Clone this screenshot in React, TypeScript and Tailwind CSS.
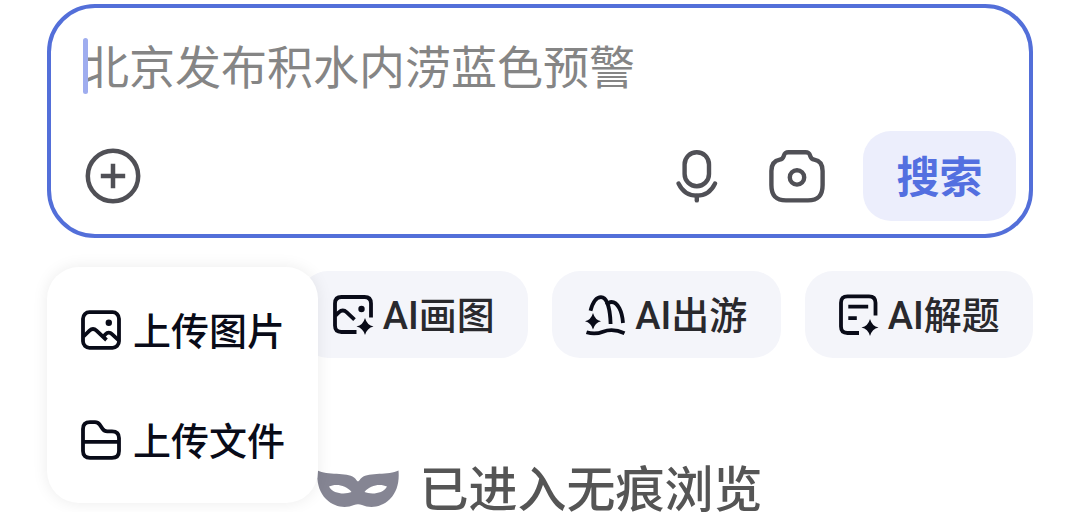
import type { ReactNode } from "react";

function PlusCircleIcon() {
  return (
    <svg width="56" height="56" viewBox="0 0 56 56" fill="none" stroke="currentColor" strokeWidth="4.5" aria-hidden="true">
      <circle cx="28" cy="28" r="25.2" />
      <path d="M15.8 28h24.4M28 15.8v24.4" />
    </svg>
  );
}

function MicIcon() {
  return (
    <svg width="42" height="54" viewBox="0 0 42 54" fill="none" stroke="currentColor" strokeWidth="4.4" strokeLinecap="round" aria-hidden="true">
      <rect x="8.6" y="3.2" width="24.4" height="34" rx="12.2" />
      <path d="M2.6 34.6C6.200 42.200 13 46.600 20.800 46.600s14.600-4.400 18.200-12" />
      <path d="M20.800 46.600v4.800" />
    </svg>
  );
}

function CameraIcon() {
  return (
    <svg width="56" height="54" viewBox="0 0 56 54" fill="none" stroke="currentColor" strokeWidth="4.4" strokeLinejoin="round" aria-hidden="true">
      <path d="M19.5 3.200H36.500C40.500 3.200 40.600 5.200 41.400 7.400C42.100 9.600 43.200 10.300 45.200 10.600C51 11.600 53.600 15.400 53.600 22V36C53.600 46.600 49 51.400 39 51.400H17C7 51.400 2.400 46.600 2.400 36V22C2.400 15.400 5 11.600 10.800 10.600C12.800 10.300 13.900 9.600 14.600 7.400C15.400 5.200 15.500 3.200 19.500 3.200Z" />
      <circle cx="28" cy="28.400" r="7.200" />
    </svg>
  );
}

function PictureIcon() {
  return (
    <svg width="40" height="40" viewBox="0 0 40 40" fill="none" stroke="currentColor" strokeWidth="3.8" aria-hidden="true">
      <rect x="2" y="2.200" width="36" height="35.600" rx="6.500" />
      <path d="M2.500 26.500L8.500 20.600C10.700 18.500 13.300 18.500 15.500 20.600L25.500 30" />
      <path d="M22 27L24.500 24.300C26.500 22.200 29 22.200 31 24.200L37.500 30.200" />
      <circle cx="27.800" cy="12.800" r="3.200" fill="currentColor" stroke="none" />
    </svg>
  );
}

function FolderIcon() {
  return (
    <svg width="40" height="40" viewBox="0 0 40 40" fill="none" stroke="currentColor" strokeWidth="3.800" strokeLinejoin="round" aria-hidden="true">
      <path d="M2 9C2 4.500 4.500 2.200 9 2.200H14C16.200 2.200 17.400 2.900 18.700 4.700L21.600 8.800C22.900 10.600 24 11.300 26.200 11.300H31C35.500 11.300 38 13.700 38 18V31C38 35.500 35.500 37.800 31 37.800H9C4.500 37.800 2 35.500 2 31Z" />
      <path d="M2 21.800H38" />
    </svg>
  );
}

function DrawIcon() {
  return (
    <svg width="42" height="42" viewBox="0 0 42 42" fill="none" stroke="currentColor" strokeWidth="3.800" aria-hidden="true">
      <path d="M23.500 38H8.500C4.200 38 2 35.800 2 31.500V9.500C2 5.200 4.200 3 8.500 3H31.500C35.800 3 38 5.200 38 9.500V23.500" />
      <path d="M2.500 21.500L5.800 18.400C8.400 16 11.200 16 13.800 18.400L21.500 25.600" />
      <circle cx="28.500" cy="15" r="3.200" fill="currentColor" stroke="none" />
      <path d="M32 24Q34 31.200 40.500 32.500Q34 34 32 41Q30 34 23.500 32.500Q30 31.200 32 24Z" fill="currentColor" stroke="none" />
    </svg>
  );
}

function TravelIcon() {
  return (
    <svg width="42" height="42" viewBox="0 0 42 42" fill="none" stroke="currentColor" strokeWidth="3.800" aria-hidden="true">
      <path d="M5.500 16.800C7.700 8.500 11 3.200 16 3.200C22.500 3.200 25.200 16 25.600 30" />
      <path d="M21.500 11C23 9 24.500 8 26.500 8C32.800 8 37.200 17.500 38 29" />
      <path d="M1.500 38.300C9 40.500 13.500 39.500 18 37.700C25.500 34.800 32 35.800 39.500 39.300" />
      <path d="M8 19Q10 26 16 27.300Q10 28.600 8 35.500Q6 28.600 0 27.300Q6 26 8 19Z" fill="currentColor" stroke="none" />
    </svg>
  );
}

function SolveIcon() {
  return (
    <svg width="42" height="42" viewBox="0 0 42 42" fill="none" stroke="currentColor" strokeWidth="3.800" aria-hidden="true">
      <path d="M21 39H9.500C5.200 39 3 36.800 3 32.500V8.800C3 4.500 5.200 2.300 9.500 2.300H31C35.300 2.300 37.500 4.500 37.500 8.800V21.500" />
      <path d="M10.300 12.600H30.200M10.300 24.200H18.800" />
      <path d="M32 25Q34 32.200 40.500 33.500Q34 34.800 32 42Q30 34.800 23.500 33.500Q30 32.200 32 25Z" fill="currentColor" stroke="none" />
    </svg>
  );
}

function MaskIcon() {
  return (
    <svg width="82" height="40" viewBox="0 0 82 40" fill="#858593" aria-hidden="true">
      <path fillRule="evenodd" d="M0.500 1.500C10 6.500 30 3 37 8.500C39.300 10.200 40 12.500 41 12.500S42.700 10.200 45 8.500C52 3 72 6.500 81.500 1.500C82.500 13 80 23 73 30C64 38.800 53 39.500 45 36C42.500 34.900 39.500 34.900 37 36C29 39.500 18 38.800 9 30C2 23-0.500 13 0.500 1.500ZM12 17.500C16 25.500 29 25.500 34.500 23C29 15.500 18 14.500 12 17.500ZM70 17.500C64 14.500 53 15.500 47.500 23C53 25.500 66 25.500 70 17.500Z" />
    </svg>
  );
}

function Chip({ icon, label }: { icon: ReactNode; label: string }) {
  return (
    <button type="button" className="flex h-[87px] items-center justify-center gap-2 rounded-[28px] bg-[#f4f5fa] text-[38px] whitespace-nowrap text-[#29292d]">
      <span className="text-[#090b18]">{icon}</span>
      <span className="pt-1 font-medium">{label}</span>
    </button>
  );
}

function MenuItem({ icon, label }: { icon: ReactNode; label: string }) {
  return (
    <button type="button" role="menuitem" className="flex items-center gap-3 text-[38px] leading-[46px] font-medium whitespace-nowrap">
      {icon}
      <span className="pt-1">{label}</span>
    </button>
  );
}

export default function App() {
  return (
    <main className="bg-white px-[47px] pt-1 font-[Roboto,'Noto_Sans_CJK_SC',sans-serif]">
      <form onSubmit={(e) => e.preventDefault()} className="rounded-[48px] border-4 border-[#536fd9] pt-[30px] pr-[13px] pb-[13px] pl-8">
        <div className="relative">
          <input
            type="text"
            aria-label="搜索内容"
            placeholder="北京发布积水内涝蓝色预警"
            className="block h-[60px] w-full bg-transparent text-[46px] leading-[60px] text-[#333] outline-none placeholder:text-[#858585]"
          />
          <span className="absolute top-0 left-0 h-14 w-[5px] rounded-full bg-[#9fadef]" />
        </div>
        <div className="mt-[33px] flex items-center pl-0.5 text-[#505056]">
          <button type="button" aria-label="添加">
            <PlusCircleIcon />
          </button>
          <button type="button" aria-label="语音搜索" className="ml-auto">
            <MicIcon />
          </button>
          <button type="button" aria-label="拍照搜索" className="ml-[51px]">
            <CameraIcon />
          </button>
          <button type="submit" className="ml-[38px] h-[90px] w-[153px] rounded-[28px] bg-[#eceefc] pt-1 text-[43px] font-bold text-[#536fe0]">
            搜索
          </button>
        </div>
      </form>

      <section className="mt-[33px] grid grid-cols-4 gap-6">
        <div className="relative">
          <div role="menu" className="absolute -top-1 left-0 z-10 flex w-[271px] flex-col gap-[60px] rounded-[32px] bg-white py-[38px] pl-[34px] text-[#090b18] shadow-[0_0_16px_rgba(0,0,0,0.08)]">
            <MenuItem icon={<PictureIcon />} label="上传图片" />
            <MenuItem icon={<FolderIcon />} label="上传文件" />
          </div>
        </div>
        <Chip icon={<DrawIcon />} label="AI画图" />
        <Chip icon={<TravelIcon />} label="AI出游" />
        <Chip icon={<SolveIcon />} label="AI解题" />
      </section>

      <p className="mt-[108px] flex items-center justify-center gap-5 text-[49px] leading-[42px] font-medium whitespace-nowrap text-[#555]">
        <MaskIcon />
        <span className="pt-1">已进入无痕浏览</span>
      </p>
    </main>
  );
}
